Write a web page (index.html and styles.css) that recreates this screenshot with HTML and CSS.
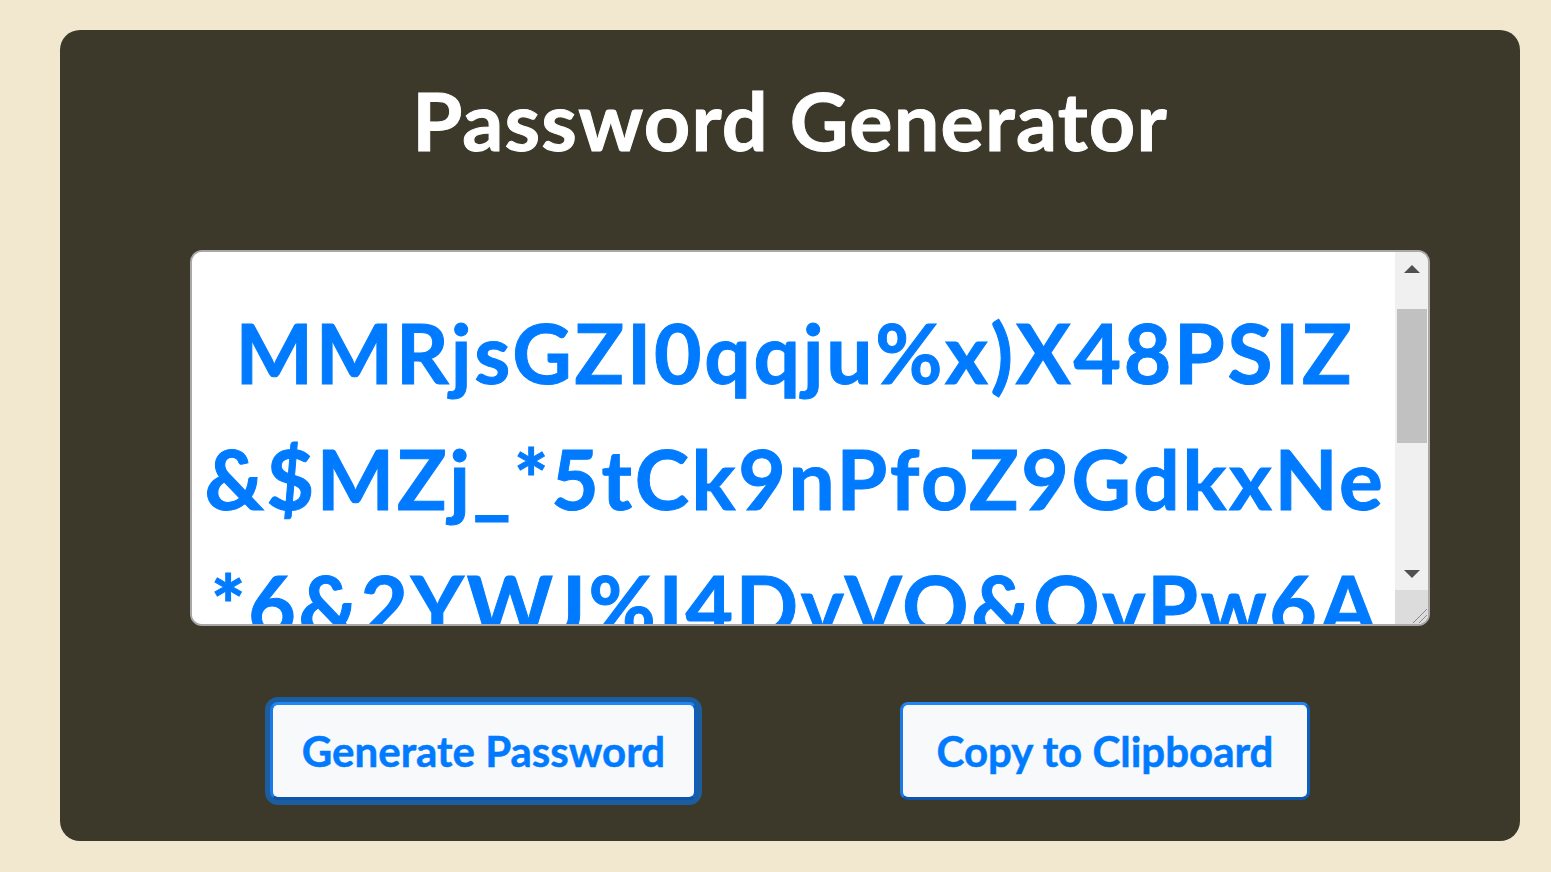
FILE: index.html
```html
<!DOCTYPE html>
<html lang="en">
<head>
<meta charset="utf-8">
<title>Password Generator</title>
<link rel="stylesheet" href="styles.css">
</head>
<body>
<main class="card">
  <h1 class="title">Password Generator</h1>
  <div class="output">
    <textarea class="password" readonly>MMRjsGZI0qqju%x)X48PSIZ
&amp;$MZj_*5tCk9nPfoZ9GdkxNe
*6&amp;2YWJ%I4DvVO&amp;OvPw6A
t9Lm#Qe2Rb!Xk7Hs</textarea>
    <div class="scrollbar" aria-hidden="true">
      <div class="sb-btn"><span class="arrow-up"></span></div>
      <div class="sb-track"><div class="sb-thumb"></div></div>
      <div class="sb-btn"><span class="arrow-down"></span></div>
      <div class="sb-corner">
        <svg width="33" height="34" viewBox="0 0 33 34">
          <line x1="18" y1="33" x2="32" y2="19" stroke="#8a8a8a" stroke-width="1"/>
          <line x1="24" y1="33" x2="32" y2="25" stroke="#8a8a8a" stroke-width="1"/>
        </svg>
      </div>
    </div>
  </div>
  <div class="actions">
    <button class="btn btn-generate" type="button">Generate Password</button>
    <button class="btn btn-copy" type="button">Copy to Clipboard</button>
  </div>
</main>
</body>
</html>
```
FILE: styles.css
```css
html, body {
  margin: 0;
  padding: 0;
}
body {
  background: #f2e8cf;
  font-family: Lato, "Open Sans", sans-serif;
  padding: 30px 31px 31px 60px;
  box-sizing: border-box;
  height: 872px;
}
.card {
  background: #3c392b;
  border-radius: 20px;
  height: 811px;
  box-sizing: border-box;
  padding: 49px 90px 0 130px;
  display: flex;
  flex-direction: column;
}
.title {
  margin: 0 0 0 -40px;
  color: #ffffff;
  font-weight: 700;
  font-size: 81px;
  line-height: 1;
  letter-spacing: 1.2px;
  -webkit-text-stroke: 1px #ffffff;
  text-align: center;
  height: 81px;
}
.output {
  margin-top: 90px;
  height: 376px;
  box-sizing: border-box;
  border: 2px solid #a8a8a8;
  border-radius: 12px;
  background: #ffffff;
  overflow: hidden;
  display: flex;
}
.password {
  flex: 1;
  border: none;
  outline: none;
  resize: none;
  overflow: hidden;
  margin: 0;
  padding: 37px 0 0 3px;
  background: #ffffff;
  color: #007bff;
  font-family: Lato, "Open Sans", sans-serif;
  font-weight: 700;
  font-size: 82px;
  line-height: 126px;
  letter-spacing: 2.7px;
  -webkit-text-stroke: 1px #007bff;
  text-align: center;
  white-space: pre;
}
.scrollbar {
  width: 33px;
  flex: none;
  background: #f0f0f0;
  display: flex;
  flex-direction: column;
}
.sb-btn {
  height: 33px;
  display: flex;
  align-items: center;
  justify-content: center;
}
.arrow-up {
  width: 0;
  height: 0;
  border-left: 8px solid transparent;
  border-right: 8px solid transparent;
  border-bottom: 8px solid #505050;
}
.arrow-down {
  width: 0;
  height: 0;
  border-left: 8px solid transparent;
  border-right: 8px solid transparent;
  border-top: 8px solid #505050;
}
.sb-track {
  flex: 1;
  padding-top: 24px;
}
.sb-thumb {
  margin: 0 1px 0 2px;
  height: 134px;
  background: #c1c1c1;
}
.sb-corner {
  height: 34px;
  background: #dcdcdc;
}
.sb-corner svg {
  display: block;
}
.actions {
  margin-top: 76px;
  margin-left: -40px;
  display: flex;
  justify-content: center;
  align-items: center;
  gap: 203px;
}
.btn {
  height: 98px;
  box-sizing: border-box;
  background: #f8f9fa;
  color: #007bff;
  font-family: Lato, "Open Sans", sans-serif;
  font-weight: 700;
  font-size: 42px;
  -webkit-text-stroke: 0.5px #007bff;
  border: 3px solid;
  border-color: #1e86f7 #0c5fc0 #0b55aa #1a7ae6;
  border-radius: 8px;
  cursor: pointer;
  text-align: center;
}
.btn-generate {
  width: 427px;
  padding: 0;
  box-shadow: 0 0 0 5px rgba(0, 123, 255, 0.55);
}
.btn-copy {
  width: 410px;
  padding: 0;
}
```
